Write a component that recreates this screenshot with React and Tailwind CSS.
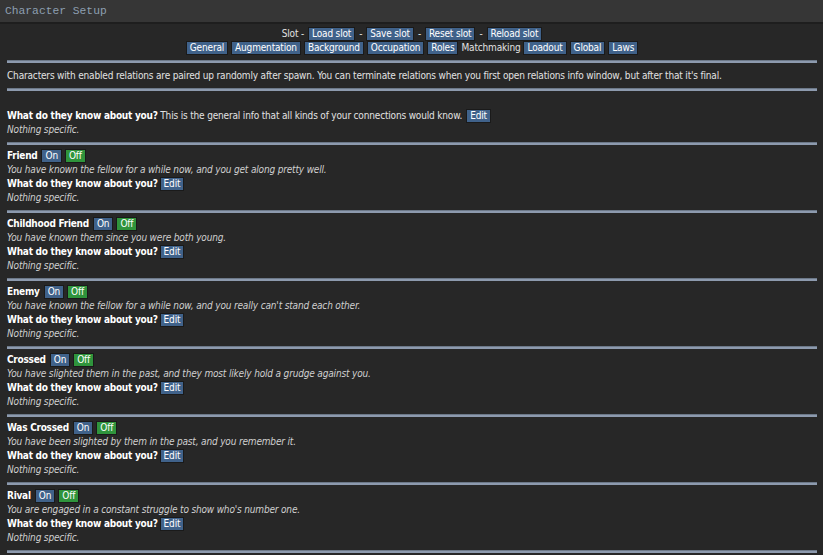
import React from 'react';

const relations = [
  { name: 'Friend', desc: 'You have known the fellow for a while now, and you get along pretty well.' },
  { name: 'Childhood Friend', desc: 'You have known them since you were both young.' },
  { name: 'Enemy', desc: "You have known the fellow for a while now, and you really can't stand each other." },
  { name: 'Crossed', desc: 'You have slighted them in the past, and they most likely hold a grudge against you.' },
  { name: 'Was Crossed', desc: 'You have been slighted by them in the past, and you remember it.' },
  { name: 'Rival', desc: "You are engaged in a constant struggle to show who's number one." },
];

const tabs = ['General', 'Augmentation', 'Background', 'Occupation', 'Roles', 'Matchmaking', 'Loadout', 'Global', 'Laws'];

const Btn = ({ children, green }) => (
  <span
    className={`inline-block px-[3px] leading-[12px] text-white border border-[#1a1a1a] ${
      green ? 'bg-[#2f943c]' : 'bg-[#40628a]'
    }`}
  >
    {children}
  </span>
);

const Rule = () => <div className="mt-[5px] mb-[4px] h-[3px] border-t border-[#6c7888] bg-[#8d9aae]" />;

const Line = ({ children, className = '' }) => (
  <div className={`h-[14px] leading-[14px] whitespace-nowrap ${className}`}>{children}</div>
);

const Bold = ({ children, className = '' }) => (
  <b className={`text-white tracking-[-0.25px] ${className}`}>{children}</b>
);

const App = () => {
  return (
    <div
      className="w-[823px] h-[555px] overflow-hidden bg-[#272727] text-[#e2e2e2] text-[10px] tracking-[-0.17px]"
      style={{ fontFamily: '"DejaVu Sans Condensed", "DejaVu Sans", Verdana, sans-serif' }}
    >
      <div className="h-[24px] bg-[#363636] border-b-2 border-[#1e1e1e] pl-[5px] flex items-center tracking-normal">
        <span className="text-[11.3px] text-[#8d9fb1]" style={{ fontFamily: '"Liberation Mono", monospace' }}>
          Character Setup
        </span>
      </div>

      <div className="pl-[7px] pr-[6px] pt-[3px]">
        <Line className="flex items-center justify-center gap-[4px]">
          <span>Slot -</span>
          <Btn>Load slot</Btn>
          <span>-</span>
          <Btn>Save slot</Btn>
          <span>-</span>
          <Btn>Reset slot</Btn>
          <span>-</span>
          <Btn>Reload slot</Btn>
        </Line>
        <Line className="flex items-center justify-center gap-[3px]">
          {tabs.map((t) =>
            t === 'Matchmaking' ? <span key={t}>{t}</span> : <Btn key={t}>{t}</Btn>
          )}
        </Line>
        <Rule />
        <div className="pt-[2px]">
          <Line>
            Characters with enabled relations are paired up randomly after spawn. You can terminate relations when you
            first open relations info window, but after that it's final.
          </Line>
        </div>
        <Rule />
        <Line />
        <Line className="flex items-center gap-[4px]">
          <span>
            <Bold>What do they know about you?</Bold> This is the general info that all kinds of your connections
            would know.
          </span>
          <Btn>Edit</Btn>
        </Line>
        <Line className="italic text-[#d0d0d0]">Nothing specific.</Line>
        <Rule />

        {relations.map((r) => (
          <div key={r.name}>
            <Line className="flex items-center gap-[3px]">
              <Bold className="mr-[1px]">{r.name}</Bold>
              <Btn>On</Btn>
              <Btn green>Off</Btn>
            </Line>
            <Line className="italic text-[#d0d0d0]">{r.desc}</Line>
            <Line className="flex items-center gap-[2px]">
              <Bold>What do they know about you?</Bold>
              <Btn>Edit</Btn>
            </Line>
            <Line className="italic text-[#d0d0d0]">Nothing specific.</Line>
            <Rule />
          </div>
        ))}
      </div>
    </div>
  );
};

export default App;
